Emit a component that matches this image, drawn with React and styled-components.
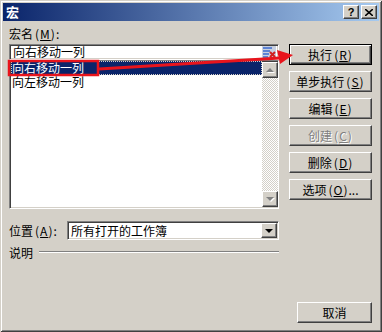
import React from 'react';
import styled, { createGlobalStyle, css } from 'styled-components';

const GlobalStyle = createGlobalStyle`
  html, body {
    margin: 0;
    padding: 0;
    background: #d4d0c8;
  }
  body {
    font-family: "Noto Sans CJK SC", "Liberation Sans", sans-serif;
    font-size: 12px;
    color: #000;
  }
`;

const Window = styled.div`
  position: relative;
  width: 382px;
  height: 332px;
  box-sizing: border-box;
  padding: 3px;
  background: #d4d0c8;
  display: flex;
  flex-direction: column;
  box-shadow: inset 1px 1px #d4d0c8, inset -1px -1px #404040, inset 2px 2px #fff,
    inset -2px -2px #808080;
`;

const TitleBar = styled.div`
  height: 18px;
  display: flex;
  align-items: center;
  padding: 0 2px 0 3px;
  background: linear-gradient(to right, #0a246a, #a6caf0);
`;

const Title = styled.div`
  flex: 1;
  color: #fff;
  font-weight: bold;
  font-size: 13px;
  line-height: 18px;
`;

const raised = css`
  box-sizing: border-box;
  background: #d4d0c8;
  border: 1px solid;
  border-color: #fff #404040 #404040 #fff;
  box-shadow: inset -1px -1px #808080, inset 1px 1px #d4d0c8;
`;

const sunken = css`
  box-sizing: border-box;
  background: #fff;
  border: 1px solid;
  border-color: #808080 #fff #fff #808080;
  box-shadow: inset 1px 1px #404040, inset -1px -1px #d4d0c8;
`;

const CaptionButton = styled.div`
  ${raised}
  width: 16px;
  height: 14px;
  margin-left: ${(p) => (p.$gap ? '2px' : '0')};
  display: flex;
  align-items: center;
  justify-content: center;
  font-family: "Liberation Sans", sans-serif;
  font-weight: bold;
  font-size: 11px;
  line-height: 12px;
`;

const Body = styled.div`
  flex: 1;
  display: flex;
  flex-direction: column;
  padding: 5px 7px 6px 6px;
`;

const Main = styled.div`
  display: flex;
  gap: 10px;
`;

const LeftCol = styled.div`
  width: 270px;
  display: flex;
  flex-direction: column;
`;

const Label = styled.div`
  height: 16px;
  line-height: 16px;
  margin-bottom: 2px;
  white-space: nowrap;
`;

const NameInput = styled.div`
  ${sunken}
  height: 16px;
  display: flex;
  align-items: center;
  padding: 0 2px 0 3px;
  line-height: 12px;
`;

const InputText = styled.div`
  flex: 1;
`;

const ListBox = styled.div`
  ${sunken}
  height: 149px;
  padding: 0 0 1px 1px;
  display: flex;
`;

const ListItems = styled.div`
  flex: 1;
  padding-top: 0;
`;

const ListRow = styled.div`
  height: 14px;
  line-height: 14px;
  padding-left: 1px;
  box-sizing: border-box;
  white-space: nowrap;
  ${(p) =>
    p.$selected &&
    css`
      background: #0a246a;
      color: #fff;
      outline: 1px dotted #d4d0c8;
      outline-offset: -1px;
    `}
`;

const ScrollBar = styled.div`
  width: 16px;
  margin-top: 1px;
  display: flex;
  flex-direction: column;
  background: repeating-conic-gradient(#fff 0 25%, #d4d0c8 0 50%) 0 0 / 2px 2px;
`;

const ScrollTrack = styled.div`
  flex: 1;
`;

const ArrowButton = styled.div`
  ${raised}
  width: 16px;
  height: 16px;
  display: flex;
  align-items: center;
  justify-content: center;
`;

const Tri = styled.div`
  width: 0;
  height: 0;
  border-left: 4px solid transparent;
  border-right: 4px solid transparent;
  ${(p) =>
    p.$up
      ? css`border-bottom: 4px solid ${p.$color};`
      : css`border-top: 4px solid ${p.$color};`}
  filter: ${(p) => (p.$disabled ? 'drop-shadow(1px 1px 0 #fff)' : 'none')};
`;

const LocationRow = styled.div`
  margin-top: 12px;
  display: flex;
  align-items: center;
`;

const LocLabel = styled.div`
  width: 58px;
  white-space: nowrap;
`;

const Select = styled.div`
  ${sunken}
  flex: 1;
  height: 19px;
  display: flex;
  align-items: center;
  padding: 1px 1px 1px 3px;
`;

const SelectText = styled.div`
  flex: 1;
  line-height: 14px;
`;

const DropButton = styled.div`
  ${raised}
  width: 16px;
  height: 15px;
  display: flex;
  align-items: center;
  justify-content: center;
`;

const DescRow = styled.div`
  margin-top: 5px;
  display: flex;
  align-items: center;
  height: 14px;
`;

const Etch = styled.div`
  flex: 1;
  margin-left: 6px;
  border-top: 1px solid #808080;
  border-bottom: 1px solid #fff;
`;

const RightCol = styled.div`
  width: 83px;
  padding-top: 18px;
  display: flex;
  flex-direction: column;
  gap: 6px;
`;

const Button = styled.div`
  box-sizing: border-box;
  width: ${(p) => p.$width || '83px'};
  height: 21px;
  display: flex;
  align-items: center;
  justify-content: center;
  background: #d4d0c8;
  white-space: nowrap;
  line-height: 14px;
  color: ${(p) => (p.$disabled ? '#808080' : '#000')};
  text-shadow: ${(p) => (p.$disabled ? '1px 1px 0 #fff' : 'none')};
  ${(p) =>
    p.$default
      ? css`
          border: 1px solid #000;
          box-shadow: inset 1px 1px #fff, inset -1px -1px #404040, inset -2px -2px #808080;
        `
      : css`
          border: 1px solid;
          border-color: #fff #404040 #404040 #fff;
          box-shadow: inset -1px -1px #808080;
        `}
`;

const Mnemonic = styled.span`
  padding-left: 2px;
  letter-spacing: 1px;
  u {
    text-decoration: underline;
  }
`;

const Footer = styled.div`
  margin-top: auto;
  display: flex;
  justify-content: flex-end;
`;

const Overlay = styled.svg`
  position: absolute;
  left: 0;
  top: 0;
  pointer-events: none;
`;

const Key = ({ children }) => (
  <Mnemonic>
    (<u>{children}</u>)
  </Mnemonic>
);

export default function App() {
  return (
    <>
      <GlobalStyle />
      <Window>
        <TitleBar>
          <Title>宏</Title>
          <CaptionButton>?</CaptionButton>
          <CaptionButton $gap>
            <svg width="8" height="7" viewBox="0 0 8 7">
              <path d="M0 0 L8 7 M8 0 L0 7" stroke="#000" strokeWidth="1.6" />
            </svg>
          </CaptionButton>
        </TitleBar>
        <Body>
          <Main>
            <LeftCol>
              <Label>
                宏名<Key>M</Key>:
              </Label>
              <NameInput>
                <InputText>向右移动一列</InputText>
                <svg width="14" height="12" viewBox="0 0 14 12">
                  <rect x="0" y="0" width="14" height="12" fill="#c8d0e0" />
                  <path d="M1 2 H10 M1 5 H8 M1 8 H7 M1 11 H6" stroke="#3a6ad0" strokeWidth="1.5" />
                  <path d="M8 6 L13 11 M13 6 L8 11" stroke="#d02020" strokeWidth="2" />
                </svg>
              </NameInput>
              <ListBox>
                <ListItems>
                  <ListRow $selected>向右移动一列</ListRow>
                  <ListRow>向左移动一列</ListRow>
                </ListItems>
                <ScrollBar>
                  <ArrowButton>
                    <Tri $up $color="#808080" $disabled />
                  </ArrowButton>
                  <ScrollTrack />
                  <ArrowButton>
                    <Tri $color="#808080" $disabled />
                  </ArrowButton>
                </ScrollBar>
              </ListBox>
              <LocationRow>
                <LocLabel>
                  位置<Key>A</Key>:
                </LocLabel>
                <Select>
                  <SelectText>所有打开的工作簿</SelectText>
                  <DropButton>
                    <Tri $color="#000" />
                  </DropButton>
                </Select>
              </LocationRow>
              <DescRow>
                说明
                <Etch />
              </DescRow>
            </LeftCol>
            <RightCol>
              <Button $default>
                执行<Key>R</Key>
              </Button>
              <Button>
                单步执行<Key>S</Key>
              </Button>
              <Button>
                编辑<Key>E</Key>
              </Button>
              <Button $disabled>
                创建<Key>C</Key>
              </Button>
              <Button>
                删除<Key>D</Key>
              </Button>
              <Button>
                选项<Key>O</Key>...
              </Button>
            </RightCol>
          </Main>
          <Footer>
            <Button $width="75px">取消</Button>
          </Footer>
        </Body>
        <Overlay width="382" height="332" viewBox="0 0 382 332">
          <rect x="9" y="61" width="89" height="14" fill="none" stroke="#e8141c" strokeWidth="2.5" />
          <path d="M99 69 L280 58" stroke="#e8141c" strokeWidth="3" />
          <polygon points="277,50 293,55 280,64" fill="#e8141c" />
        </Overlay>
      </Window>
    </>
  );
}
